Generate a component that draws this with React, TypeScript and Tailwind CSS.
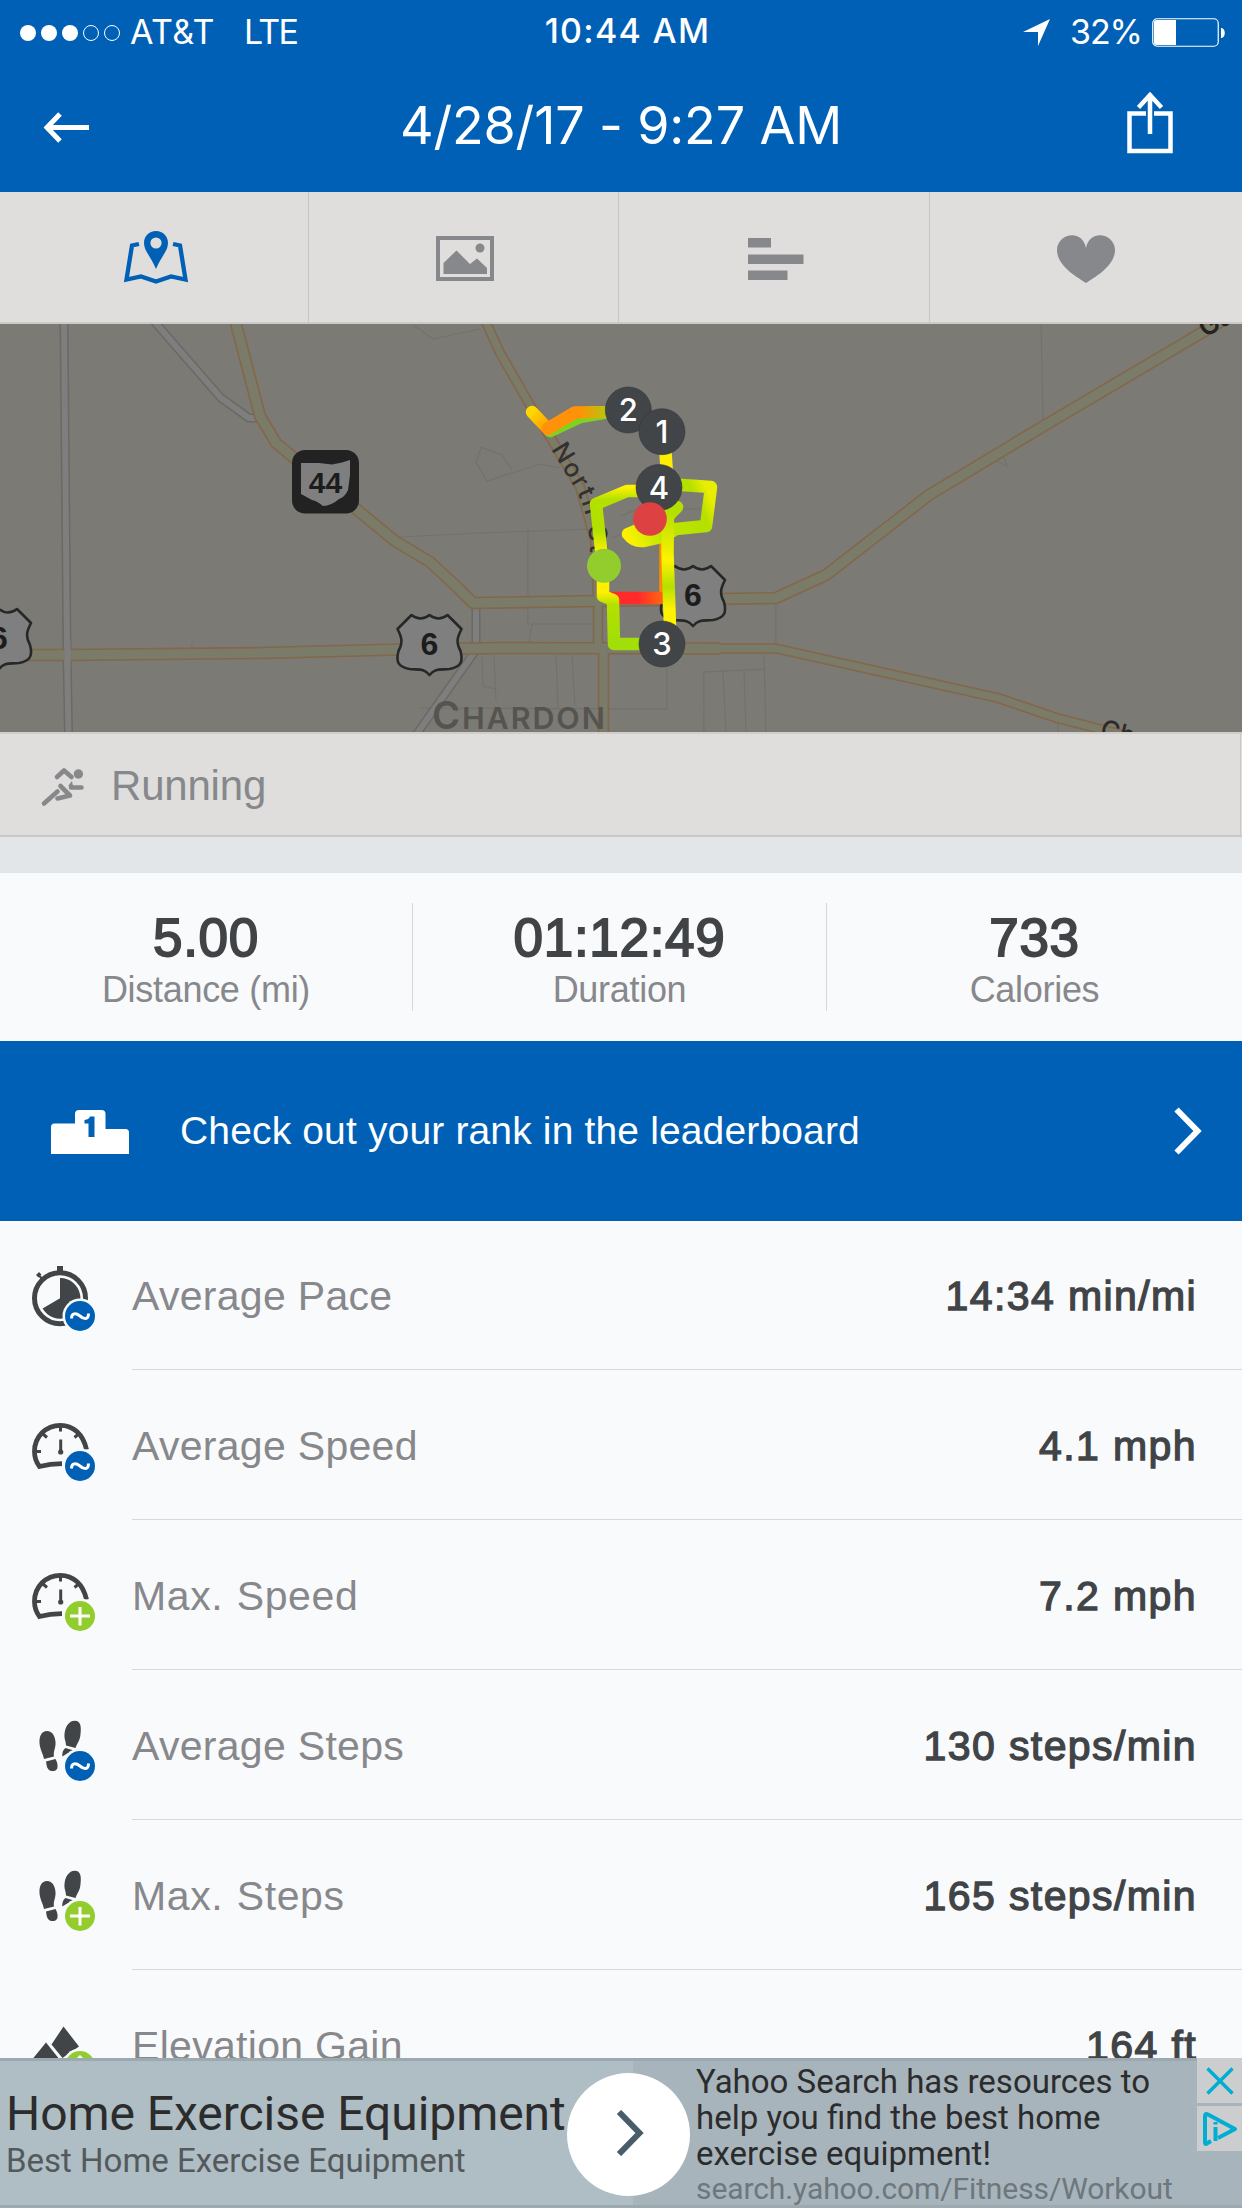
import type { ReactNode } from "react";

function StatusBar() {
  return (
    <div className="grid h-16 grid-cols-3 font-['Inter',sans-serif] text-[34px] leading-[62px] text-white">
      <div className="flex items-center pl-[20px]">
        <div className="flex gap-[5px] pt-[1px]">
          {[1, 1, 1, 0, 0].map((on, i) => (
            <span key={i} className={on ? "size-4 rounded-full bg-white" : "size-4 rounded-full border border-white"} />
          ))}
        </div>
        <span className="ml-[10px] tracking-[0.4px]">AT&amp;T</span>
        <span className="ml-[29px] tracking-[-1.6px]">LTE</span>
      </div>
      <div className="pl-[13px] text-center font-[550] tracking-[1.3px]">10:44 AM</div>
      <div className="flex items-center justify-end pr-[17px]">
        <svg className="mr-[20px] h-[27px] w-[27px]" viewBox="0 0 27 27">
          <path d="M27 0 15 27V13H0Z" fill="#fff" />
        </svg>
        <span className="mr-[10px] tracking-[-1px]">32%</span>
        <svg className="h-[29px] w-[73px]" viewBox="0 0 73 29">
          <rect x=".75" y=".75" width="65.5" height="27.5" rx="4.5" fill="none" stroke="#fff" strokeWidth="1.2" />
          <path d="M4.500 2H24V27H4.500Q2 27 2 24.500V4.500Q2 2 4.500 2Z" fill="#fff" />
          <path d="M69 10C74 10 74 20 69 20Z" fill="#fff" />
        </svg>
      </div>
    </div>
  );
}

function TitleBar() {
  return (
    <div className="flex h-32 items-center justify-between text-white">
      <svg className="ml-[43px] h-[32px] w-[47px]" viewBox="0 0 47 32" fill="none" stroke="#fff" strokeWidth="5">
        <path d="M3 15.500H46M17 2 4 15.500 17 29" />
      </svg>
      <h1 className="pb-[5px] pl-[25px] font-['Inter',sans-serif] text-[52px] leading-none tracking-[-0.15px]">4/28/17 - 9:27 AM</h1>
      <svg className="mr-[69px] mb-[10px] h-[62px] w-[46px]" viewBox="0 0 46 62" fill="none" stroke="#fff" strokeWidth="4.500">
        <path d="M19 21.500H2.500V59H43.500V21.500H27M23 4V42M11.500 15.500 23 3 34.500 15.500" />
      </svg>
    </div>
  );
}

function Tabs() {
  return (
    <div className="grid h-[132px] grid-cols-[309px_310px_311px_312px] border-b-[2px] border-[#cbcac8] bg-[#dfdedc]">
      <div className="flex items-center justify-center border-r border-[#c6c5c3] pt-[1px] pl-[3px]">
        <svg className="h-[53px] w-[64px]" viewBox="0 0 64 53">
          <path d="M15 13 8 14.500 2.500 48.500 17 45.500 32 50.500 47 45.500 61.500 48.500 56 14.500 49 13" fill="none" stroke="#0060b6" strokeWidth="4.300" />
          <path d="M32 0C25 0 20 5 20 12 20 20 26 24 32 38 38 24 44 20 44 12 44 5 39 0 32 0Z" fill="#0060b6" />
          <circle cx="32" cy="12" r="5.600" fill="#dfdedc" />
        </svg>
      </div>
      <div className="flex items-center justify-center border-r border-[#c6c5c3] pt-[2px] pl-[3px]">
        <svg className="h-[45px] w-[58px]" viewBox="0 0 58 45" fill="#86888b">
          <rect x="2" y="2" width="54" height="41" fill="none" stroke="#86888b" strokeWidth="4" />
          <path d="M7.500 27 20.500 14.500 34 28 41 22.500 51 32V38H7.500Z" />
          <circle cx="44" cy="12" r="4.500" />
        </svg>
      </div>
      <div className="flex items-center justify-center border-r border-[#c6c5c3] pt-[4px] pl-[3px]">
        <svg className="h-[42px] w-[56px]" viewBox="0 0 56 42" fill="#86888b">
          <path d="M0 0H23V9.500H0ZM0 16.500H55.500V26H0ZM0 32.500H39.500V42H0Z" />
        </svg>
      </div>
      <div className="flex items-center justify-center pt-[3px]">
        <svg className="h-[48px] w-[58px]" viewBox="0 0 58 48" fill="#86888b">
          <path d="M29 48C20 42 0 31 0 15 0 -1 25 -7 29 13 33 -7 58 -1 58 15 58 31 38 42 29 48Z" />
        </svg>
      </div>
    </div>
  );
}

const YELLOW_ROADS: { d: string; w: number }[] = [
  { d: "M235 320 260 416 276 443 395 541 430 562 458 588 473 603 600 601 776 598 826 575 929 495 1042 427 1242 309", w: 12.5 },
  { d: "M0 655H67L260 653 400 649.500 500 648 720 648.500", w: 12.5 },
  { d: "M700 648.500H776L998 698 1057 718 1100 729 1160 744", w: 10.5 },
  { d: "M485 320 500 353 530 405 552 440 580 487 595 540 598 600V648", w: 10.5 },
  { d: "M603.500 648V735", w: 11.5 },
];

const WHITE_ROADS = [
  "M64 320 67 650 68.500 735",
  "M153 320 221 398 249 418 262 418",
  "M476 606V645",
  "M476 650 416 735",
];

const THIN_LINES =
  "M413 325 433 339 480 329M480 447 502 455 512 470M476 462 481 448M476 462 487 481 540 464 560 468M400 537 480 533 595 529M192 643V650M528 530V626M529 642 532 624 594 624M482 656 483 686 496 689M494 655 496 700M556 655 558 709M572 655 575 705M420 708 667 709V660M704 735V672L766 669M723 670 726 735M744 670 746 735M764 655 766 735M776 604V645M1041 324 1043 420M997 461 1007 466 1004 457M1058 722V735M621 516 640 508M611 538 640 528M682 509H700";

const SHIELD =
  "M-18 -30Q-9 -23 0 -30Q9 -23 18 -30L32 -16C28 -8 26 -3 31 6C34 17 31 22 20 24C10 25 6 23 0 30C-6 23 -10 25 -20 24C-31 22 -34 17 -31 6C-26 -3 -28 -8 -32 -16Z";

const ROUTE: { d: string; c: string }[] = [
  { d: "M606 412.500 580 417 550 431", c: "#7ed321" },
  { d: "M532 412 548 429", c: "url(#g1)" },
  { d: "M548 428.500 575 412.500 606 412 628 410 662 431", c: "url(#g2)" },
  { d: "M665 445 667 475", c: "#ffee00" },
  { d: "M665.5 545V598", c: "#ff8a00" },
  { d: "M612 598H664", c: "url(#g6)" },
  { d: "M652 524 628 534Q634 542 644 541L662 537 676 529 706 526 711 487 682 485 659 487", c: "url(#g3)" },
  { d: "M669 515 677 507", c: "#b4e000" },
  { d: "M668 512 667.5 553 670 627", c: "url(#g4)" },
  { d: "M662 644H614L613 600 603 596V567L596 504 627 491 642 491", c: "url(#g5)" },
];

const MILES: [string, number, number][] = [
  ["2", 628.3, 410],
  ["1", 662, 431.7],
  ["4", 659, 487.5],
  ["3", 662, 644],
];

function RouteMap() {
  return (
    <svg className="block h-[408px] w-full bg-[#7c7a75] font-['Inter',sans-serif]" viewBox="0 324 1242 408">
      <defs>
        <linearGradient id="g1" gradientUnits="userSpaceOnUse" x1="532" y1="412" x2="548" y2="430">
          <stop offset="0" stopColor="#ffd800" />
          <stop offset="1" stopColor="#ff9500" />
        </linearGradient>
        <linearGradient id="g2" gradientUnits="userSpaceOnUse" x1="548" y1="0" x2="628" y2="0">
          <stop offset="0.4" stopColor="#ff9208" />
          <stop offset="0.75" stopColor="#b4c80c" />
          <stop offset="1" stopColor="#a8e000" />
        </linearGradient>
        <linearGradient id="g3" gradientUnits="userSpaceOnUse" x1="628" y1="540" x2="712" y2="500">
          <stop offset="0" stopColor="#fff200" />
          <stop offset="0.35" stopColor="#bfe600" />
          <stop offset="0.85" stopColor="#b4e000" />
          <stop offset="1" stopColor="#e8ee00" />
        </linearGradient>
        <linearGradient id="g4" gradientUnits="userSpaceOnUse" x1="0" y1="512" x2="0" y2="627">
          <stop offset="0" stopColor="#b4e000" />
          <stop offset="0.42" stopColor="#fff200" />
          <stop offset="0.65" stopColor="#b4e000" />
          <stop offset="0.85" stopColor="#fff200" />
        </linearGradient>
        <linearGradient id="g5" gradientUnits="userSpaceOnUse" x1="0" y1="644" x2="0" y2="487">
          <stop offset="0" stopColor="#a2de08" />
          <stop offset="0.25" stopColor="#b4e000" />
          <stop offset="0.33" stopColor="#fff000" />
          <stop offset="0.58" stopColor="#fff200" />
          <stop offset="0.72" stopColor="#b4e000" />
          <stop offset="0.92" stopColor="#b4e000" />
          <stop offset="1" stopColor="#fff200" />
        </linearGradient>
        <linearGradient id="g6" gradientUnits="userSpaceOnUse" x1="612" y1="0" x2="664" y2="0">
          <stop offset="0.5" stopColor="#ff2a2a" />
          <stop offset="1" stopColor="#ff6a10" />
        </linearGradient>
        <path id="north" d="M551 449 574 487Q590 514 590 552" />
      </defs>
      <path d={THIN_LINES} fill="none" stroke="#73716c" strokeWidth="1.100" />
      <g fill="none" strokeLinejoin="round">
        {WHITE_ROADS.map((d) => (
          <g key={d}>
            <path d={d} stroke="#6b6964" strokeWidth="9" />
            <path d={d} stroke="#7f7e7e" strokeWidth="6" />
          </g>
        ))}
        {YELLOW_ROADS.map((r) => (
          <path key={r.d} d={r.d} stroke="#83674a" strokeWidth={r.w} />
        ))}
        {YELLOW_ROADS.map((r) => (
          <path key={r.d} d={r.d} stroke="#7b7b69" strokeWidth={r.w - 3.2} />
        ))}
        <path d="M67.500 640V670" stroke="#7f7e7e" strokeWidth="6" />
      </g>

      <rect x="292" y="450" width="67" height="63.500" rx="13" fill="#222" />
      <path d="M301 463H319L332 464.500 342 462.500 350 460V475L348 490Q345 497 339 499 331 506 323 506 317 501 312 500L301 494Z" fill="#7f7f7f" />
      <text x="325.500" y="492.500" fontSize="30" fontWeight="700" textAnchor="middle" fill="#1c1c1c" fontFamily="Liberation Sans">44</text>

      {[
        [-1, 639],
        [429.5, 645],
        [693, 596],
      ].map(([x, y]) => (
        <g key={x} transform={`translate(${x} ${y})`}>
          <path d={SHIELD} fill="#7f7f7f" stroke="#262828" strokeWidth="2.600" strokeLinejoin="round" />
          <text y="10" fontSize="32" fontWeight="700" textAnchor="middle" fill="#1c1c1c" fontFamily="Liberation Sans">6</text>
        </g>
      ))}

      <text x="432" y="729" fontSize="38" fontWeight="600" fill="#555450" letterSpacing="1.900">
        C<tspan fontSize="30.500">HARDON</tspan>
      </text>
      <text fontSize="25" fontWeight="500" fill="#323130" letterSpacing="2">
        <textPath href="#north">North St</textPath>
      </text>
      <text transform="translate(1205 338) rotate(-30)" fontSize="27" fontWeight="600" fill="#232323">Ga</text>
      <text transform="translate(1099 737) rotate(14)" fontSize="26" fontWeight="500" fill="#2c2b2a">Ch</text>

      <g fill="none" strokeLinecap="round" strokeLinejoin="round" strokeWidth="12.500">
        {ROUTE.map((s) => (
          <path key={s.d} d={s.d} stroke={s.c} />
        ))}
      </g>
      {MILES.map(([n, x, y]) => (
        <g key={n}>
          <circle cx={x} cy={y} r="23" fill="#414548" stroke="#33363a" strokeWidth=".6" />
          <text x={x} y={y + 11} fontSize="31" fontWeight="550" textAnchor="middle" fill="#fff">{n}</text>
        </g>
      ))}
      <circle cx="650" cy="519" r="16.800" fill="#dd4142" />
      <circle cx="604" cy="565.700" r="17" fill="#92cd2d" />
    </svg>
  );
}

function Activity() {
  return (
    <div className="flex h-[105px] border-t-2 border-b-2 border-t-[#cfceca] border-b-[#c9c8c4] bg-[#dfdedc] pr-[1px]">
      <div className="flex flex-1 items-center border-r border-[#c9c8c4]">
        <svg className="mt-[4px] ml-[40px] h-[42px] w-[46px]" viewBox="40 767 46 42" fill="none" stroke="#86888b" strokeWidth="4.600" strokeLinecap="round">
          <circle cx="78.400" cy="775" r="4.700" fill="#86888b" stroke="none" />
          <path d="M57 778 64 771.500 71.500 778M71 788.500H81.500M57.500 792.500 44 804.500" strokeLinejoin="round" />
          <path d="M60.500 787 70 796.500 57.500 799.500" strokeLinejoin="round" />
          <path d="M72 782 73 787H68Z" fill="#86888b" stroke="none" />
        </svg>
        <span className="mt-[3px] ml-[25px] text-[42px] leading-none tracking-[-0.2px] text-[#86888b]">Running</span>
      </div>
    </div>
  );
}

function Stat({ value, label }: { value: string; label: string }) {
  return (
    <div className="flex h-[108px] flex-col items-center border-[#d6d7d9] not-last:border-r">
      <span className="mt-[6px] text-[53px] leading-[58px] tracking-[0.7px] text-[#414447] [-webkit-text-stroke:1.8px_#414447]">{value}</span>
      <span className="text-[36px] leading-[46px] tracking-[-0.3px] text-[#87888b]">{label}</span>
    </div>
  );
}

function Leaderboard() {
  return (
    <div className="relative z-10 flex h-[180px] items-center bg-[#0060b6] text-white">
      <svg className="mt-[2px] ml-[51px] h-[44px] w-[78px]" viewBox="0 0 78 44">
        <path d="M0 44V17Q0 13.500 3.500 13.500H24V4Q24 0 28 0H50.500Q54.500 0 54.500 4V19H74.500Q78 19 78 22.500V44Z" fill="#fff" />
        <path d="M43.500 6.500V27H37.500V13.500H33.500V10Q38 9.500 39 6.500Z" fill="#0060b6" />
      </svg>
      <span className="mb-[2px] ml-[51px] flex-1 text-[39px] leading-none tracking-[0.15px]">Check out your rank in the leaderboard</span>
      <svg className="mr-[39px] h-[50px] w-[31px]" viewBox="0 0 31 50">
        <path d="M4.500 3.500 25.500 25 4.500 46.500" fill="none" stroke="#fff" strokeWidth="6" />
      </svg>
    </div>
  );
}

function StopwatchGlyph() {
  return (
    <g>
      <circle cx="60" cy="3.300" r="25.500" fill="none" stroke="#414548" strokeWidth="5" />
      <path d="M57 -29H63V-23H57ZM43.500 -16.500 40.500 -19.500 41.500 -20.500 39 -23 36 -20 38.500 -17.500 39 -18 42 -14Z" fill="#414548" />
      <path d="M60 3.300V-17A20.300 20.300 0 1 1 42.600 13.500Z" fill="#414548" />
    </g>
  );
}

function GaugeGlyph() {
  return (
    <g fill="none" stroke="#414548">
      <path d="M86.500 4.500C83 -11 73 -19.700 60.500 -19.700C46 -19.700 34.500 -8.500 34.500 6.500C34.500 12 36 17 39.500 21.500Q50 18.700 62 18.700" strokeWidth="4.800" />
      <path d="M60.500 -18V-13.500M36 6.500H41M43 -11 47 -7.500M78.500 -11 74.500 -7.500" strokeWidth="3" />
      <path d="M60.700 -5.500V7" strokeWidth="3" />
      <circle cx="60.700" cy="7" r="2.600" fill="#414548" stroke="none" />
    </g>
  );
}

function StepsGlyph() {
  return (
    <g fill="#414548">
      <path d="M47 -14C41.500 -14 39 -9 39.500 -2C40 5 43 8 44 14L54 11.500C53 6 56 3 55.500 -3C55 -9 52.500 -14 47 -14Z" />
      <path d="M46 16.500 55.500 14C57.500 17 58 21 57.300 23.500C56 26.500 51 27 48.500 24.500C46.500 22.500 46.500 19 46 16.500Z" />
      <path d="M75 -24.300C69 -24.500 65 -18 64.500 -11C64 -6 66 -4 66 0.500L75.500 3C77 -2 80 -4 80.500 -11C81.500 -19 80.500 -24 75 -24.300Z" />
      <path d="M65.500 3 74 5.500 68 8 62.300 11.500C62 8 63 4.500 65.500 3Z" />
    </g>
  );
}

function MountainGlyph() {
  return (
    <g fill="#414548">
      <path d="M63.500 -18.500 79 1.500 62.500 13 51.500 -0.500ZM46 -2.500 60 15V26H26V22Z" />
    </g>
  );
}

type Kind = "avg" | "max" | "gain";

function MetricIcon({ glyph, kind }: { glyph: ReactNode; kind: Kind }) {
  return (
    <svg className="ml-[20px] h-[80px] w-[80px] shrink-0" viewBox="20 -40 80 80">
      {glyph}
      <circle cx="80" cy="21" r="17.500" fill="#f9fafc" />
      <circle cx="80" cy="21" r="15" fill={kind === "avg" ? "#0060b6" : "#92cd2d"} />
      {kind === "avg" && <path d="M71.500 23.500C71.500 17.500 76 18 80 21C84 24.500 88.500 25 88.500 18.500" fill="none" stroke="#fff" strokeWidth="3" />}
      {kind === "max" && <path d="M70 21H90M80 12V30.500" stroke="#fff" strokeWidth="3" />}
      {kind === "gain" && <path d="M80 31V14M73 19 80 12 87 19" stroke="#fff" strokeWidth="3" fill="none" />}
    </svg>
  );
}

function Metric({ glyph, kind, label, value }: { glyph: ReactNode; kind: Kind; label: string; value: string }) {
  return (
    <div className="flex h-[150px] shrink-0 items-center">
      <MetricIcon glyph={glyph} kind={kind} />
      <div className="ml-[32px] flex h-full flex-1 items-center justify-between border-b border-[#d6d8da] pt-[4px] pr-[45px] text-[41px] leading-none">
        <span className={kind === "max" ? "tracking-[0.6px] [word-spacing:1.5px] text-[#87888b]" : "tracking-[0.3px] text-[#87888b]"}>{label}</span>
        <span className="tracking-[1.4px] text-[#414447] [-webkit-text-stroke:1.3px_#414447]">{value}</span>
      </div>
    </div>
  );
}

function AdBanner() {
  return (
    <div className="absolute inset-x-0 bottom-0 z-20 flex h-[150px] border-y-[3px] border-[#9ca9af] bg-[#afbdc4] font-['Roboto',sans-serif]">
      <div className="flex w-[633px] flex-col pl-[6px] whitespace-nowrap">
        <span className="mt-[25px] text-[48px] leading-[56px] tracking-[-0.05px] text-[#2c2c2c]">Home Exercise Equipment</span>
        <span className="mt-[-1px] text-[33px] leading-[40px] text-[#54595c]">Best Home Exercise Equipment</span>
      </div>
      <div className="flex-1 bg-[#a8b4bc] pt-[3px] pl-[63px] whitespace-nowrap">
        <p className="text-[33px] leading-[36px] text-[#2c2c2c]">
          Yahoo Search has resources to
          <br />
          help you find the best home
          <br />
          exercise equipment!
        </p>
        <p className="text-[30px] leading-[33px] tracking-[-0.1px] text-[#6d777c]">search.yahoo.com/Fitness/Workout</p>
      </div>
      <div className="absolute top-[12px] left-[567px] flex size-[123px] items-center justify-center rounded-full bg-white">
        <svg className="mb-[4px] ml-[2px] h-[46px] w-[28px]" viewBox="0 0 28 46">
          <path d="M3 2 23.500 23 3 44" fill="none" stroke="#485c69" strokeWidth="6" />
        </svg>
      </div>
      <div className="absolute top-[-3px] right-0 flex flex-col gap-[3px]">
        <div className="flex size-[45px] items-center justify-center bg-[#cccdce]">
          <svg className="size-[28px]" viewBox="0 0 28 28">
            <path d="M1.500 1.500 26.500 26.500M26.500 1.500 1.500 26.500" stroke="#00aed3" strokeWidth="3.500" />
          </svg>
        </div>
        <div className="flex size-[45px] items-center justify-center bg-[#cccdce]">
          <svg className="h-[36px] w-[36px]" viewBox="0 0 36 36" fill="none" stroke="#00aed3" strokeWidth="4" strokeLinejoin="round">
            <path d="M9 30 4 33Q3 33 3 31V5Q3 2 6 3.500L33 18 16 27" />
            <path d="M13.500 16V30M13.500 11V13.500" />
          </svg>
        </div>
      </div>
    </div>
  );
}

export default function App() {
  return (
    <div className="relative flex h-[2208px] w-[1242px] flex-col overflow-hidden bg-[#f9fafc] font-['Liberation_Sans',Arial,sans-serif]">
      <header className="h-[192px] shrink-0 bg-[#0060b6]">
        <StatusBar />
        <TitleBar />
      </header>
      <Tabs />
      <RouteMap />
      <Activity />
      <div className="h-[36px] shrink-0 bg-[#e2e6e9]" />
      <section className="grid h-[168px] shrink-0 grid-cols-[413px_414px_415px] items-center">
        <Stat value="5.00" label="Distance (mi)" />
        <Stat value="01:12:49" label="Duration" />
        <Stat value="733" label="Calories" />
      </section>
      <Leaderboard />
      <section className="mt-[-1px] flex flex-col">
        <Metric glyph={<StopwatchGlyph />} kind="avg" label="Average Pace" value="14:34 min/mi" />
        <Metric glyph={<GaugeGlyph />} kind="avg" label="Average Speed" value="4.1 mph" />
        <Metric glyph={<GaugeGlyph />} kind="max" label="Max. Speed" value="7.2 mph" />
        <Metric glyph={<StepsGlyph />} kind="avg" label="Average Steps" value="130 steps/min" />
        <Metric glyph={<StepsGlyph />} kind="max" label="Max. Steps" value="165 steps/min" />
        <Metric glyph={<MountainGlyph />} kind="gain" label="Elevation Gain" value="164 ft" />
      </section>
      <AdBanner />
    </div>
  );
}
